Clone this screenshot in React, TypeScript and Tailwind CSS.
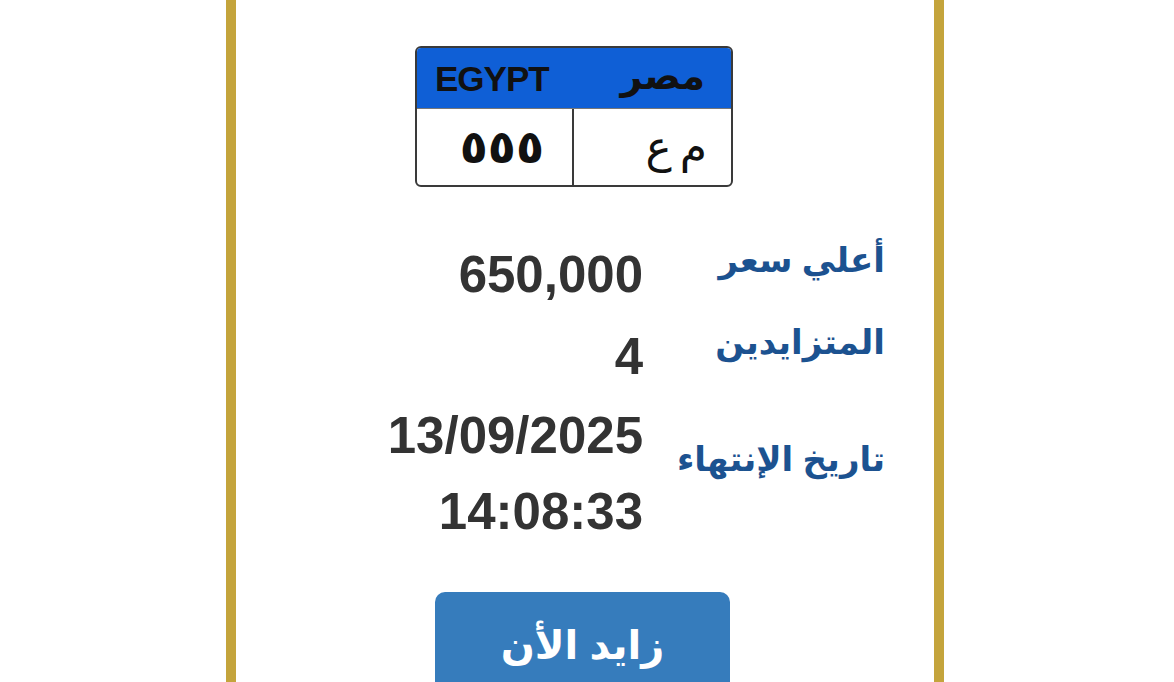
const ar = { fontFamily: '"Liberation Sans", "DejaVu Sans", sans-serif' };

function Plate() {
  return (
    <div className="ml-[179px] mt-[46px] w-[318px] overflow-hidden rounded-[6px] border-2 border-[#3a3a3a] bg-white">
      <div className="flex h-[60px] items-center justify-between bg-[#0f5fd6] pl-[18px] pr-[26px]" style={ar}>
        <span className="text-[35px] font-bold leading-none tracking-[-1px] text-[#111]">EGYPT</span>
        <span dir="rtl" className="mt-[-4px] text-[38px] font-bold leading-none text-[#111]">مصر</span>
      </div>
      <div className="flex h-[77px] border-t border-[#777]">
        <div className="flex w-[157px] items-center justify-end border-r-2 border-[#3a3a3a] pr-[28px]">
          <span dir="rtl" className="text-[46px] font-bold leading-none text-[#111]" style={ar}>
            ٥٥٥
          </span>
        </div>
        <div dir="rtl" className="flex flex-1 items-center gap-[8px] pr-[24px] text-[44px] leading-none text-[#111]" style={ar}>
          <span>م</span>
          <span>ع</span>
        </div>
      </div>
    </div>
  );
}

function Row({ label, lines, pad }: { label: string; lines: string[]; pad: string }) {
  return (
    <div className={`grid grid-cols-[260px_217px] items-center gap-x-[25px] ${pad}`}>
      <div className="text-right text-[51px] font-bold leading-[76px] text-[#333]" style={ar}>
        {lines.map((l) => (
          <div key={l}>{l}</div>
        ))}
      </div>
      <div dir="rtl" className="mt-[-30px] text-right text-[34px] font-bold leading-[40px] text-[#1c5290]" style={ar}>
        {label}
      </div>
    </div>
  );
}

export default function App() {
  return (
    <div className="h-[682px] w-[1174px] overflow-hidden bg-white">
      <div className="ml-[226px] h-[682px] w-[718px] border-x-[10px] border-[#c4a43c] bg-white">
        <div className="flex flex-col items-start">
          <Plate />
          <div className="ml-[147px] mt-[50px] flex flex-col">
            <Row label="أعلي سعر" lines={["650,000"]} pad="pb-[6px]" />
            <Row label="المتزايدين" lines={["4"]} pad="pb-[3px]" />
            <Row label="تاريخ الإنتهاء" lines={["13/09/2025", "14:08:33"]} pad="" />
          </div>
          <button
            dir="rtl"
            className="ml-[199px] mt-[42px] h-[100px] w-[295px] rounded-[10px] bg-[#367cbc] pt-[6px] text-[40px] font-bold text-white"
            style={ar}
          >
            زايد الأن
          </button>
        </div>
      </div>
    </div>
  );
}
